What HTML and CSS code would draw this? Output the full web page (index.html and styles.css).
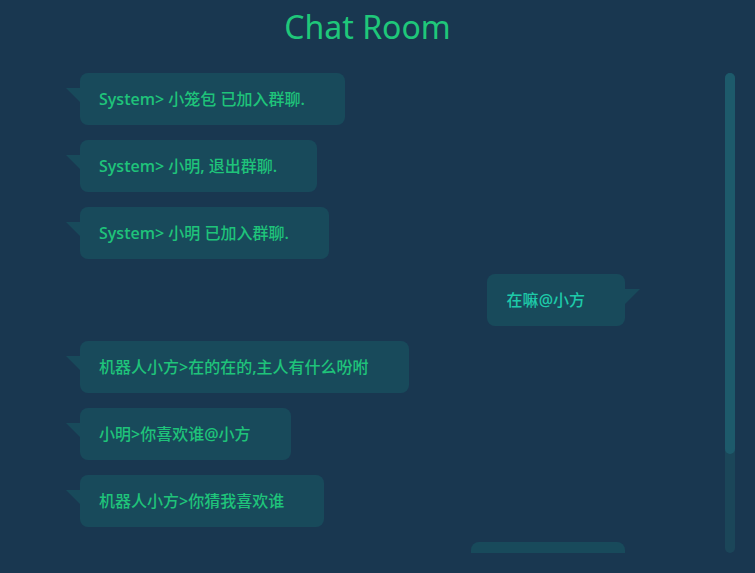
FILE: index.html
```html
<!DOCTYPE html>
<html lang="zh">
<head>
<meta charset="utf-8">
<title>Chat Room</title>
<link rel="stylesheet" href="styles.css">
</head>
<body>
<h1 class="title">Chat Room</h1>
<div class="chat">
  <div class="msgs">
    <div class="bubble left"><span class="lat">System&gt;</span> 小笼包 已加入群聊<span class="lat">.</span></div>
    <div class="bubble left"><span class="lat">System&gt;</span> 小明<span class="lat">,</span> 退出群聊<span class="lat">.</span></div>
    <div class="bubble left"><span class="lat">System&gt;</span> 小明 已加入群聊<span class="lat">.</span></div>
    <div class="bubble right">在嘛<span class="lat">@</span>小方</div>
    <div class="bubble left">机器人小方<span class="lat">&gt;</span>在的在的<span class="lat">,</span>主人有什么吩咐</div>
    <div class="bubble left">小明<span class="lat">&gt;</span>你喜欢谁<span class="lat">@</span>小方</div>
    <div class="bubble left">机器人小方<span class="lat">&gt;</span>你猜我喜欢谁</div>
    <div class="bubble right last">喜欢你<span class="lat">@</span>小方</div>
  </div>
  <div class="scrollbar"><div class="thumb"></div></div>
</div>
</body>
</html>
```
FILE: styles.css
```css
html, body {
  margin: 0;
  padding: 0;
  background: #193750;
  height: 100%;
  overflow: hidden;
}
body {
  font-family: "Open Sans", "Noto Sans CJK SC", sans-serif;
}
.title {
  margin: 0;
  padding: 7px 20px 0 0;
  height: 66px;
  box-sizing: border-box;
  text-align: center;
  font-family: "Noto Sans", "Open Sans", sans-serif;
  font-weight: 400;
  font-size: 32px;
  line-height: 40px;
  color: #1fc77a;
}
.chat {
  display: flex;
  margin: 7px 20px 0 46px;
  height: 480px;
}
.msgs {
  flex: 1;
  display: flex;
  flex-direction: column;
  gap: 15px;
  overflow: hidden;
}
.scrollbar {
  width: 10px;
  flex: none;
  background: #1b4659;
  border-radius: 5px;
}
.thumb {
  height: 381px;
  background: #1d5a6b;
  border-radius: 5px;
}
.bubble {
  position: relative;
  flex: none;
  height: 52px;
  box-sizing: border-box;
  padding: 0 40px 0 19px;
  line-height: 52px;
  background: #184a5b;
  border-radius: 8px;
  font-size: 16px;
  font-weight: 500;
  white-space: nowrap;
}
.lat {
  font-weight: 600;
}
.bubble.left {
  align-self: flex-start;
  margin-left: 34px;
  color: #1fc37a;
}
.bubble.right {
  align-self: flex-end;
  margin-right: 100px;
  padding-left: 20px;
  color: #1ec9a9;
}
.bubble.left::before {
  content: "";
  position: absolute;
  left: -14px;
  top: 15px;
  width: 0;
  height: 0;
  border-top: 14px solid #184a5b;
  border-left: 14px solid transparent;
}
.bubble.right::after {
  content: "";
  position: absolute;
  right: -15px;
  top: 15px;
  width: 0;
  height: 0;
  border-top: 15px solid #184a5b;
  border-right: 15px solid transparent;
}
```
